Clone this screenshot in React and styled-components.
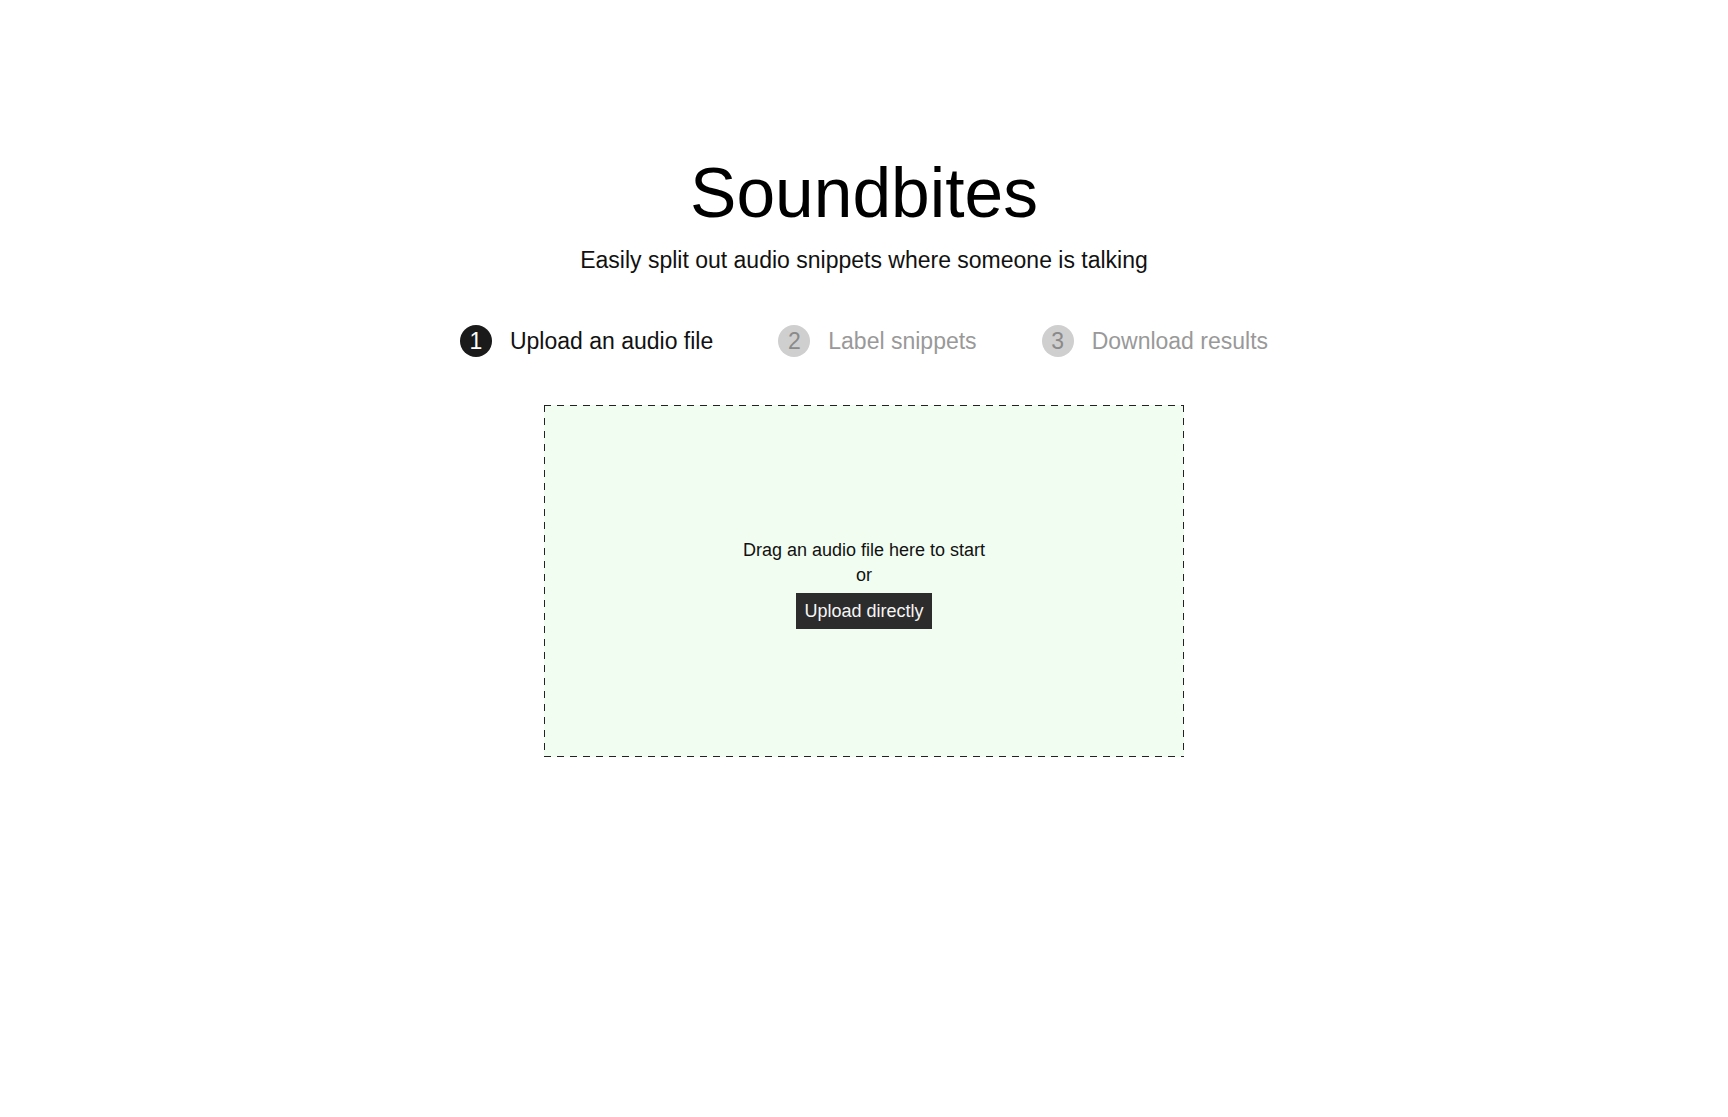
import React from "react";
import styled, { createGlobalStyle } from "styled-components";

const Global = createGlobalStyle`
  html, body { margin: 0; padding: 0; background: #ffffff; }
  body {
    font-family: "Liberation Sans", Arial, Helvetica, sans-serif;
    color: #111111;
  }
  * { box-sizing: border-box; }
`;

const Page = styled.main`
  display: flex;
  flex-direction: column;
  align-items: center;
  padding-top: 153px;
  min-height: 100vh;
`;

const Title = styled.h1`
  margin: 0;
  font-size: 69.5px;
  font-weight: 400;
  line-height: normal;
  color: #000000;
`;

const Subtitle = styled.p`
  margin: 14px 0 0;
  font-size: 23px;
  line-height: normal;
  color: #111111;
`;

const Steps = styled.ol`
  display: flex;
  gap: 65px;
  list-style: none;
  margin: 51px 0 0;
  padding: 0;
`;

const Step = styled.li`
  display: flex;
  align-items: center;
  gap: 18px;
`;

const StepNumber = styled.span`
  width: 32px;
  height: 32px;
  border-radius: 50%;
  display: flex;
  align-items: center;
  justify-content: center;
  font-size: 23px;
  line-height: 1;
  background: ${(p) => (p.$active ? "#1a1a1a" : "#cfcfcf")};
  color: ${(p) => (p.$active ? "#ffffff" : "#8a8a8a")};
`;

const StepLabel = styled.span`
  font-size: 23px;
  line-height: normal;
  color: ${(p) => (p.$active ? "#111111" : "#999999")};
`;

const dashH = "repeating-linear-gradient(90deg, #222 0 7px, transparent 7px 13px)";
const dashV = "repeating-linear-gradient(180deg, #222 0 7px, transparent 7px 13px)";

const DropZone = styled.section`
  margin-top: 48px;
  width: 640px;
  height: 352px;
  background:
    ${dashH} left top / 100% 1px no-repeat,
    ${dashH} left bottom / 100% 1px no-repeat,
    ${dashV} left top / 1px 100% no-repeat,
    ${dashV} right top / 1px 100% no-repeat,
    #f2fdf2;
  display: flex;
  flex-direction: column;
  align-items: center;
  justify-content: center;
  padding-top: 4px;
  font-size: 18px;
  line-height: 25px;
  color: #111111;
`;

const DropLine = styled.div`
  text-align: center;
`;

const UploadButton = styled.button`
  margin-top: 5px;
  border: none;
  border-radius: 0;
  background: #2c2c2c;
  color: #f5f5f5;
  font-family: inherit;
  font-size: 18px;
  line-height: 20px;
  padding: 8px 8px;
  cursor: pointer;
`;

const steps = [
  { n: 1, label: "Upload an audio file", active: true },
  { n: 2, label: "Label snippets", active: false },
  { n: 3, label: "Download results", active: false },
];

export default function App() {
  return (
    <>
      <Global />
      <Page>
        <Title>Soundbites</Title>
        <Subtitle>Easily split out audio snippets where someone is talking</Subtitle>
        <Steps>
          {steps.map((s) => (
            <Step key={s.n}>
              <StepNumber $active={s.active}>{s.n}</StepNumber>
              <StepLabel $active={s.active}>{s.label}</StepLabel>
            </Step>
          ))}
        </Steps>
        <DropZone>
          <DropLine>Drag an audio file here to start</DropLine>
          <DropLine>or</DropLine>
          <UploadButton type="button">Upload directly</UploadButton>
        </DropZone>
      </Page>
    </>
  );
}
